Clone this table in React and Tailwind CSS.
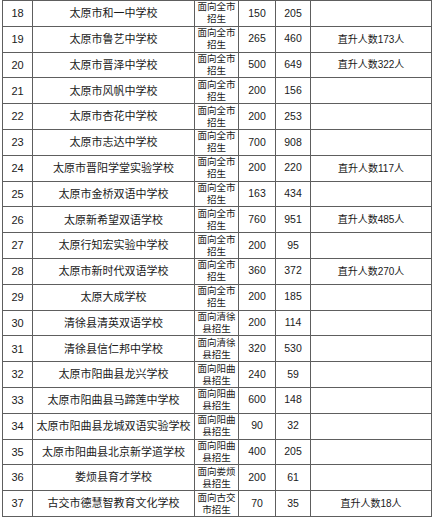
import React from "react";

const rows = [
  [18, "太原市和一中学校", ["面向全市", "招生"], 150, 205, ""],
  [19, "太原市鲁艺中学校", ["面向全市", "招生"], 265, 460, "直升人数173人"],
  [20, "太原市晋泽中学校", ["面向全市", "招生"], 500, 649, "直升人数322人"],
  [21, "太原市风帆中学校", ["面向全市", "招生"], 200, 156, ""],
  [22, "太原市杏花中学校", ["面向全市", "招生"], 200, 253, ""],
  [23, "太原市志达中学校", ["面向全市", "招生"], 700, 908, ""],
  [24, "太原市晋阳学堂实验学校", ["面向全市", "招生"], 200, 220, "直升人数117人"],
  [25, "太原市金桥双语中学校", ["面向全市", "招生"], 163, 434, ""],
  [26, "太原新希望双语学校", ["面向全市", "招生"], 760, 951, "直升人数485人"],
  [27, "太原行知宏实验中学校", ["面向全市", "招生"], 200, 95, ""],
  [28, "太原市新时代双语学校", ["面向全市", "招生"], 360, 372, "直升人数270人"],
  [29, "太原大成学校", ["面向全市", "招生"], 200, 185, ""],
  [30, "清徐县清英双语学校", ["面向清徐", "县招生"], 200, 114, ""],
  [31, "清徐县信仁邦中学校", ["面向清徐", "县招生"], 320, 530, ""],
  [32, "太原市阳曲县龙兴学校", ["面向阳曲", "县招生"], 240, 59, ""],
  [33, "太原市阳曲县马蹄莲中学校", ["面向阳曲", "县招生"], 600, 148, ""],
  [34, "太原市阳曲县龙城双语实验学校", ["面向阳曲", "县招生"], 90, 32, ""],
  [35, "太原市阳曲县北京新学道学校", ["面向阳曲", "县招生"], 400, 205, ""],
  [36, "娄烦县育才学校", ["面向娄烦", "县招生"], 200, 61, ""],
  [37, "古交市德慧智教育文化学校", ["面向古交", "市招生"], 70, 35, "直升人数18人"],
];

const cell = "flex items-center justify-center border-r border-b border-[#5e5e5e] text-center";

export default function App() {
  return (
    <div
      className="w-[433px] h-[520px] overflow-hidden bg-white text-[#1a1a1a]"
      style={{ fontFamily: '"Liberation Sans", "Noto Sans CJK SC", sans-serif' }}
    >
      <div className="ml-[2px] w-[430px] border-l border-t border-[#5e5e5e]">
        {rows.map(([no, name, scope, plan, enroll, note]) => (
          <div key={no} className="grid grid-cols-[30px_162px_44px_37px_35px_121px] h-[25.8px]">
            <div className={`${cell} text-[11px]`}>{no}</div>
            <div className={`${cell} text-[11px]`}>{name}</div>
            <div className={`${cell} flex-col text-[9.5px] leading-[12px] whitespace-nowrap`}>
              <span>{scope[0]}</span>
              <span>{scope[1]}</span>
            </div>
            <div className={`${cell} text-[10.5px]`}>{plan}</div>
            <div className={`${cell} text-[10.5px]`}>{enroll}</div>
            <div className={`${cell} text-[10px]`}>{note}</div>
          </div>
        ))}
      </div>
    </div>
  );
}
